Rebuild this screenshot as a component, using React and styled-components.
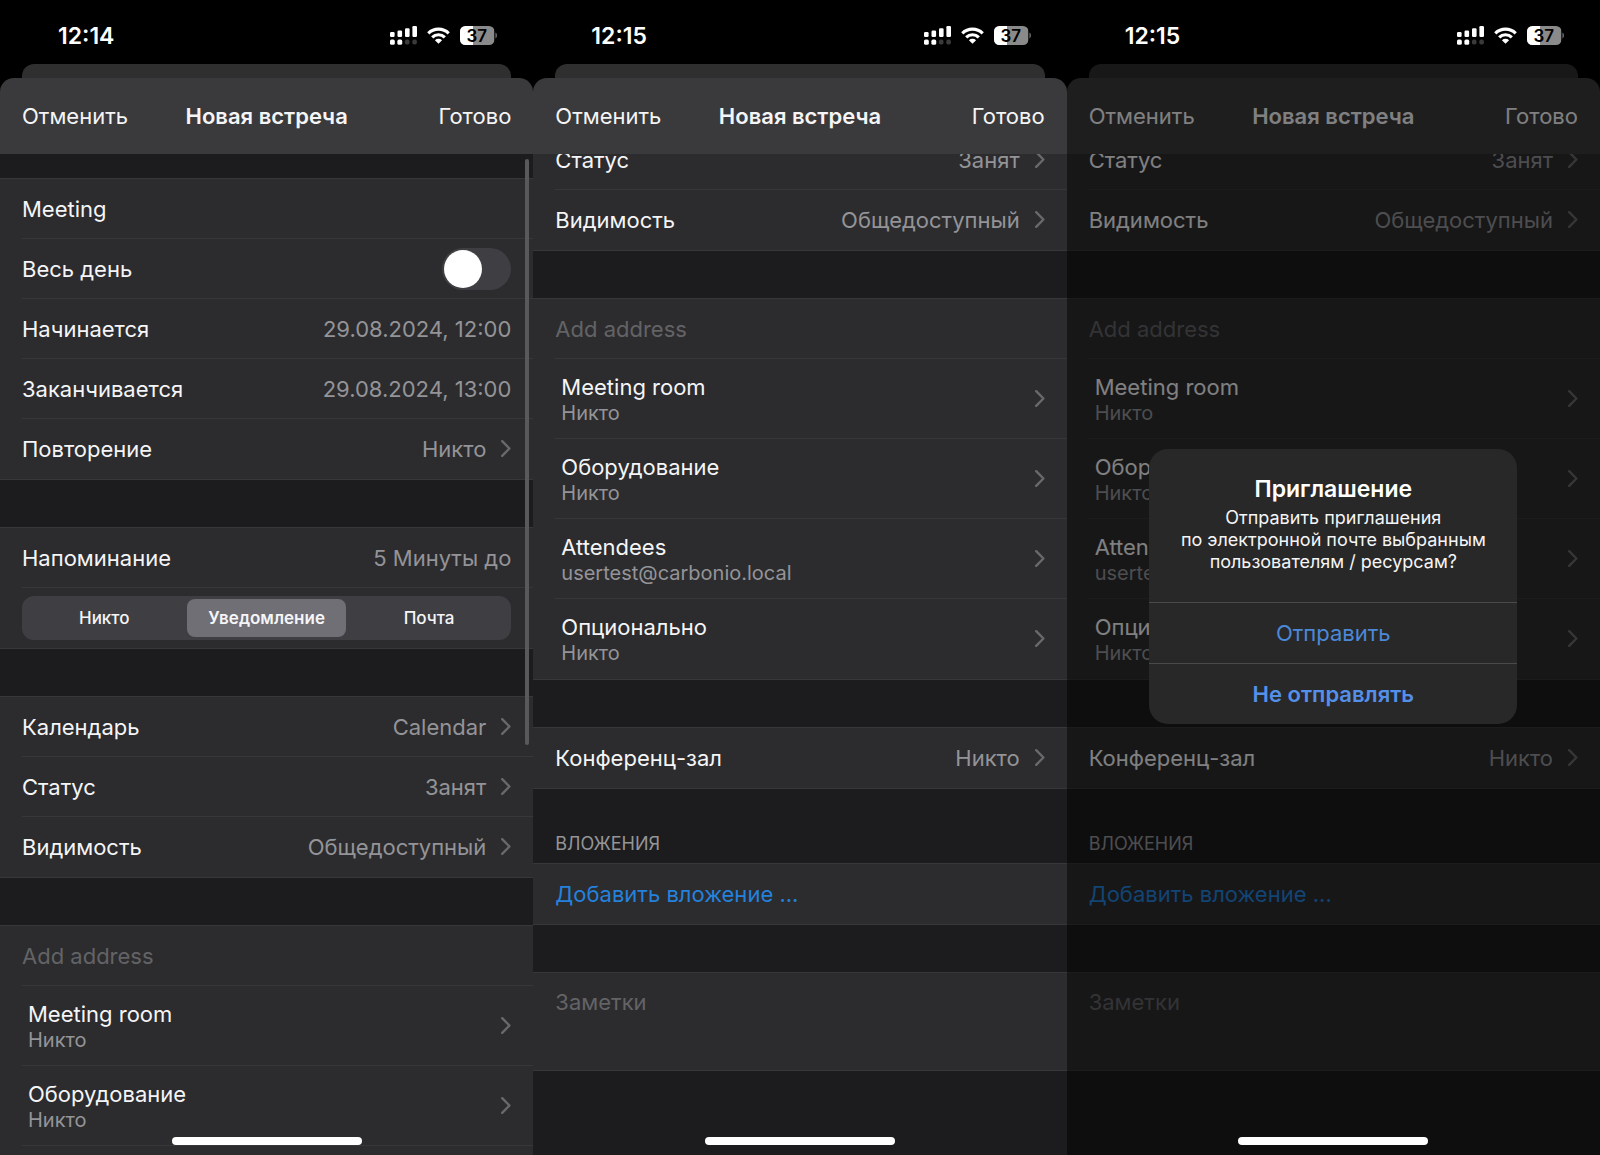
import React, { useId } from 'react';
import styled, { createGlobalStyle } from 'styled-components';

const c = {
  page: '#1c1c1e',
  group: '#2c2c2e',
  bar: '#3a3a3c',
  peek: '#2f2f30',
  line: '#373739',
  text: '#f5f5f7',
  value: '#949498',
  faint: '#636366',
  control: '#3f3f43',
  selected: '#706f76',
  link: '#2482de',
};

const GlobalStyle = createGlobalStyle`
  *, *::before, *::after { box-sizing: border-box; }
  body { margin: 0; background: #000; }
  body, button, input, textarea {
    font-family: Inter, "Liberation Sans", sans-serif;
    font-size: 22px;
    line-height: 28px;
  }
  button, input, textarea {
    margin: 0; padding: 0; border: 0; border-radius: 0;
    background: none; color: inherit; outline: none;
  }
  button { cursor: pointer; text-align: left; }
  h1, h2, h3, p, ul { margin: 0; padding: 0; font-weight: inherit; font-size: inherit; }
  ul { list-style: none; }
`;

const Gallery = styled.main`
  display: grid;
  grid-template-columns: repeat(3, minmax(0, 1fr));
  height: 100vh;
`;

const Screen = styled.section`
  position: relative;
  display: flex;
  flex-direction: column;
  min-height: 0;
  overflow: hidden;
  background: #000;
  color: ${c.text};
`;

const StatusBar = styled.div`
  position: relative;
  z-index: 2;
  flex: none;
  display: flex;
  align-items: center;
  justify-content: space-between;
  height: 64px;
  padding: 7px 36px 0 58px;
  color: #fff;
`;

const Clock = styled.time`
  font-size: 23px;
  font-weight: 600;
`;

const StatusIcons = styled.div`
  display: flex;
  align-items: center;
  gap: 10px;
`;

const Peek = styled.div`
  flex: none;
  height: 14px;
  margin: 0 22px;
  border-radius: 12px 12px 0 0;
  background: ${c.peek};
`;

const NavBar = styled.header`
  flex: none;
  display: grid;
  grid-template-columns: 1fr auto 1fr;
  align-items: center;
  height: 76px;
  padding: 0 22px;
  border-radius: 14px 14px 0 0;
  background: ${c.bar};
`;

const NavTitle = styled.h1`
  font-weight: 600;
`;

const NavButton = styled.button`
  justify-self: ${(p) => (p.$end ? 'end' : 'start')};
`;

const Scroller = styled.div`
  position: relative;
  flex: 1;
  min-height: 0;
  display: flex;
  flex-direction: column;
  justify-content: ${(p) => (p.$atEnd ? 'flex-end' : 'flex-start')};
  padding: ${(p) => (p.$atEnd ? '0 0 84px' : '24px 0 0')};
  overflow: hidden;
  background: ${c.page};
`;

const ScrollThumb = styled.div`
  position: absolute;
  top: 5px;
  right: 4px;
  width: 4px;
  height: 586px;
  border-radius: 2px;
  background: #59595b;
`;

const Item = styled.li`
  display: flex;
  height: ${(p) => (p.$tall ? 80 : 60)}px;
  padding-left: 22px;
  & > * { border-bottom: 1px solid ${c.line}; }
`;

const Group = styled.ul`
  flex: ${(p) => (p.$open ? '1 0 auto' : 'none')};
  border: solid ${c.line};
  border-width: ${(p) => (p.$open ? '1px 0 0' : '1px 0')};
  background: ${c.group};
  & + & { margin-top: 47px; }
  ${(p) => !p.$open && `${Item}:last-child > * { border-bottom-color: transparent; }`}
`;

const Section = styled.section`
  flex: none;
  margin-bottom: 47px;
`;

const SectionTitle = styled.h2`
  padding: 44px 22px 8px;
  font-size: 18px;
  line-height: 22px;
  color: ${c.value};
  text-transform: uppercase;
`;

const Line = styled.div`
  flex: 1;
  min-width: 0;
  display: flex;
  align-items: center;
  gap: 15px;
  padding-right: 22px;
`;

const Label = styled.span`
  flex: 1;
  white-space: nowrap;
`;

const Value = styled.span`
  color: ${c.value};
  white-space: nowrap;
`;

const Stack = styled.span`
  flex: 1;
  display: flex;
  flex-direction: column;
  padding-left: 6px;
`;

const Detail = styled.span`
  font-size: 20px;
  line-height: 24px;
  color: ${c.value};
`;

const TextField = styled.input`
  flex: 1;
  min-width: 0;
  padding-right: 22px;
  &::placeholder { color: ${c.faint}; opacity: 1; }
`;

const NotesItem = styled(Item)`
  height: 97px;
`;

const Notes = styled.textarea`
  flex: 1;
  min-width: 0;
  padding: 15px 22px 0 0;
  resize: none;
  &::placeholder { color: ${c.faint}; opacity: 1; }
`;

const LinkButton = styled.button`
  flex: 1;
  color: ${c.link};
`;

const Toggle = styled.input`
  appearance: none;
  display: flex;
  width: 69px;
  height: 42px;
  padding: 2px;
  border-radius: 21px;
  background: ${c.control};
  &::before {
    content: '';
    width: 38px;
    height: 38px;
    border-radius: 50%;
    background: #fff;
  }
  &:checked { justify-content: flex-end; background: #30d158; }
`;

const Segments = styled.div`
  flex: 1;
  display: grid;
  grid-template-columns: repeat(3, 1fr);
  gap: 4px;
  padding: 3px;
  border-radius: 12px;
  background: ${c.control};
`;

const Segment = styled.label`
  position: relative;
  display: grid;
  place-items: center;
  height: 38px;
  border-radius: 8px;
  font-size: 17px;
  line-height: 22px;
  font-weight: 500;
  &:has(input:checked) { background: ${c.selected}; font-weight: 600; }
  input { position: absolute; inset: 0; appearance: none; }
`;

const HomeBar = styled.div`
  position: absolute;
  z-index: 2;
  bottom: 10px;
  left: 50%;
  width: 190px;
  height: 8px;
  margin-left: -95px;
  border-radius: 4px;
  background: #fff;
`;

const Dimmer = styled.div`
  position: absolute;
  inset: 0;
  z-index: 1;
  display: grid;
  place-items: center;
  padding-top: 18px;
  background: rgba(0, 0, 0, 0.48);
`;

const Alert = styled.div`
  width: 69%;
  border-radius: 19px;
  overflow: hidden;
  background: #282828;
  text-align: center;
`;

const AlertBody = styled.div`
  padding: 26px 16px 29px;
`;

const AlertTitle = styled.h2`
  margin-bottom: 4px;
  font-size: 23px;
  font-weight: 600;
  color: #fff;
`;

const AlertText = styled.p`
  font-size: 18px;
  line-height: 22px;
`;

const AlertButton = styled.button`
  display: block;
  width: 100%;
  height: 61px;
  border-top: 1px solid #4a4a4b;
  text-align: center;
  font-weight: ${(p) => (p.$strong ? 600 : 400)};
  color: ${(p) => (p.$strong ? '#5490ea' : '#4c88d8')};
`;

const SignalIcon = () => (
  <svg width="27" height="19" viewBox="0 0 27 19" fill="#fff" aria-hidden="true">
    <rect x="0" y="6" width="4.6" height="5" rx="1.2" />
    <rect x="7.5" y="4.6" width="4.6" height="6.4" rx="1.2" />
    <rect x="15" y="2.2" width="4.6" height="8.8" rx="1.2" />
    <rect x="22.4" y="0" width="4.6" height="11" rx="1.2" />
    <rect x="0" y="13.6" width="4.8" height="5.2" rx="1.6" />
    <rect x="7.4" y="13.6" width="4.8" height="5.2" rx="1.6" />
    <rect x="14.9" y="13.6" width="4.6" height="5" rx="1.8" fill="#3a3a3a" />
    <rect x="22.3" y="13.6" width="4.6" height="5" rx="1.8" fill="#3a3a3a" />
  </svg>
);

const WifiIcon = () => (
  <svg width="23" height="17" viewBox="0 0 23 17" aria-hidden="true">
    <g fill="none" stroke="#fff" strokeWidth="3.2">
      <path d="M1.3 6.3a14.6 14.6 0 0 1 20.4 0" />
      <path d="M5.2 10.3a9 9 0 0 1 12.6 0" />
    </g>
    <path d="M11.5 16.8 7.9 13.2a5.2 5.2 0 0 1 7.2 0z" fill="#fff" />
  </svg>
);

const BatteryIcon = () => {
  const clip = useId();
  return (
    <svg width="37" height="19" viewBox="0 0 37 19" role="img" aria-label="37%">
      <clipPath id={clip}>
        <rect width="34.5" height="19" rx="5.5" />
      </clipPath>
      <g clipPath={`url(#${clip})`}>
        <rect width="34.5" height="19" fill="#8a8a8a" />
        <rect width="13" height="19" fill="#fff" />
      </g>
      <path d="M35.5 6.6c1.8.7 1.8 5.1 0 5.8z" fill="#7a7a7a" />
      <text x="16.8" y="15.6" textAnchor="middle" fontFamily="Inter, sans-serif" fontSize="17" fontWeight="600">
        37
      </text>
    </svg>
  );
};

const Chevron = () => (
  <svg width="10" height="17" viewBox="0 0 10 17" fill="none" stroke="#69696d" strokeWidth="2.4" aria-hidden="true">
    <path d="M1.2 1.2 8.4 8.5l-7.2 7.3" strokeLinecap="round" strokeLinejoin="round" />
  </svg>
);

const Row = ({ label, value, chevron }) => (
  <Item>
    <Line as="button" type="button">
      <Label>{label}</Label>
      <Value>{value}</Value>
      {chevron && <Chevron />}
    </Line>
  </Item>
);

const PersonRow = ({ label, detail }) => (
  <Item $tall>
    <Line as="button" type="button">
      <Stack>
        <span>{label}</span>
        <Detail>{detail}</Detail>
      </Stack>
      <Chevron />
    </Line>
  </Item>
);

const AddressItem = () => (
  <Item>
    <TextField type="text" placeholder="Add address" aria-label="Add address" />
  </Item>
);

const Phone = ({ time, children, overlay }) => (
  <Screen>
    <StatusBar>
      <Clock>{time}</Clock>
      <StatusIcons>
        <SignalIcon />
        <WifiIcon />
        <BatteryIcon />
      </StatusIcons>
    </StatusBar>
    <Peek />
    <NavBar>
      <NavButton type="button">Отменить</NavButton>
      <NavTitle>Новая встреча</NavTitle>
      <NavButton type="button" $end>Готово</NavButton>
    </NavBar>
    {children}
    {overlay}
    <HomeBar />
  </Screen>
);

const reminders = ['Никто', 'Уведомление', 'Почта'];

const FormTop = () => {
  const id = useId();
  return (
    <Scroller>
      <Group>
        <Item>
          <TextField type="text" defaultValue="Meeting" aria-label="Meeting" />
        </Item>
        <Item>
          <Line>
            <Label as="label" htmlFor={id}>Весь день</Label>
            <Toggle type="checkbox" role="switch" id={id} />
          </Line>
        </Item>
        <Row label="Начинается" value="29.08.2024, 12:00" />
        <Row label="Заканчивается" value="29.08.2024, 13:00" />
        <Row label="Повторение" value="Никто" chevron />
      </Group>
      <Group>
        <Row label="Напоминание" value="5 Минуты до" />
        <Item>
          <Line>
            <Segments role="radiogroup" aria-label="Напоминание">
              {reminders.map((name) => (
                <Segment key={name}>
                  <input type="radio" name="reminder" defaultChecked={name === 'Уведомление'} />
                  {name}
                </Segment>
              ))}
            </Segments>
          </Line>
        </Item>
      </Group>
      <Group>
        <Row label="Календарь" value="Calendar" chevron />
        <Row label="Статус" value="Занят" chevron />
        <Row label="Видимость" value="Общедоступный" chevron />
      </Group>
      <Group $open>
        <AddressItem />
        <PersonRow label="Meeting room" detail="Никто" />
        <PersonRow label="Оборудование" detail="Никто" />
      </Group>
      <ScrollThumb />
    </Scroller>
  );
};

const FormEnd = () => (
  <Scroller $atEnd>
    <Group>
      <Row label="Статус" value="Занят" chevron />
      <Row label="Видимость" value="Общедоступный" chevron />
    </Group>
    <Group>
      <AddressItem />
      <PersonRow label="Meeting room" detail="Никто" />
      <PersonRow label="Оборудование" detail="Никто" />
      <PersonRow label="Attendees" detail="usertest@carbonio.local" />
      <PersonRow label="Опционально" detail="Никто" />
    </Group>
    <Group>
      <Row label="Конференц-зал" value="Никто" chevron />
    </Group>
    <Section>
      <SectionTitle>Вложения</SectionTitle>
      <Group>
        <Item>
          <LinkButton type="button">Добавить вложение ...</LinkButton>
        </Item>
      </Group>
    </Section>
    <Group>
      <NotesItem>
        <Notes placeholder="Заметки" aria-label="Заметки" />
      </NotesItem>
    </Group>
  </Scroller>
);

const InviteAlert = () => (
  <Dimmer>
    <Alert role="alertdialog" aria-label="Приглашение">
      <AlertBody>
        <AlertTitle>Приглашение</AlertTitle>
        <AlertText>
          Отправить приглашения
          <br />
          по электронной почте выбранным
          <br />
          пользователям / ресурсам?
        </AlertText>
      </AlertBody>
      <AlertButton type="button">Отправить</AlertButton>
      <AlertButton type="button" $strong>Не отправлять</AlertButton>
    </Alert>
  </Dimmer>
);

export default function App() {
  return (
    <>
      <GlobalStyle />
      <Gallery>
        <Phone time="12:14">
          <FormTop />
        </Phone>
        <Phone time="12:15">
          <FormEnd />
        </Phone>
        <Phone time="12:15" overlay={<InviteAlert />}>
          <FormEnd />
        </Phone>
      </Gallery>
    </>
  );
}
